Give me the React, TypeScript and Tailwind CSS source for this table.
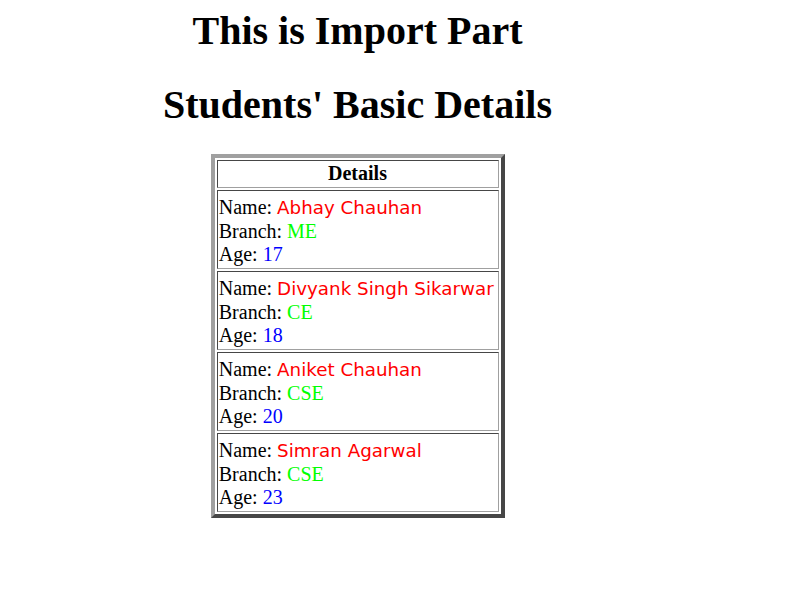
import React from 'react';

type Student = { name: string; branch: string; age: number };

const students: Student[] = [
  { name: 'Abhay Chauhan', branch: 'ME', age: 17 },
  { name: 'Divyank Singh Sikarwar', branch: 'CE', age: 18 },
  { name: 'Aniket Chauhan', branch: 'CSE', age: 20 },
  { name: 'Simran Agarwal', branch: 'CSE', age: 23 },
];

const cell =
  'border border-t-[#464646] border-l-[#464646] border-r-[#a0a0a0] border-b-[#a0a0a0] p-[1.25px] whitespace-nowrap';

export default function App() {
  return (
    <div className="min-h-screen bg-white">
      <div className="w-[715px] pt-[8px] text-center text-black font-['Liberation_Serif','Times_New_Roman',serif]">
        <h1 className="text-[40px] font-bold leading-[46px]">This is Import Part</h1>
        <h1 className="mt-[28px] text-[40px] font-bold leading-[46px]">Students' Basic Details</h1>

        <table className="mx-auto mt-[26px] w-[294px] border-separate border-spacing-[2.5px] border-4 border-t-[#a0a0a0] border-l-[#a0a0a0] border-r-[#464646] border-b-[#464646] text-[20px] leading-[23px]">
          <thead>
            <tr>
              <th className={`${cell} font-bold text-center`}>Details</th>
            </tr>
          </thead>
          <tbody>
            {students.map((s) => (
              <tr key={s.name}>
                <td className={`${cell} text-left align-middle`}>
                  {/* name line is taller, like the comic font it stands in for */}
                  <div className="pt-[4.5px] pb-[1px]">
                    Name:{' '}
                    <span className="text-[#ff0000] text-[18.3px] leading-[20px] font-['DejaVu_Sans',sans-serif]">
                      {s.name}
                    </span>
                  </div>
                  <div>
                    Branch: <span className="text-[#00ff00]">{s.branch}</span>
                  </div>
                  <div>
                    Age: <span className="text-[#0000ff]">{s.age}</span>
                  </div>
                </td>
              </tr>
            ))}
          </tbody>
        </table>
      </div>
    </div>
  );
}
